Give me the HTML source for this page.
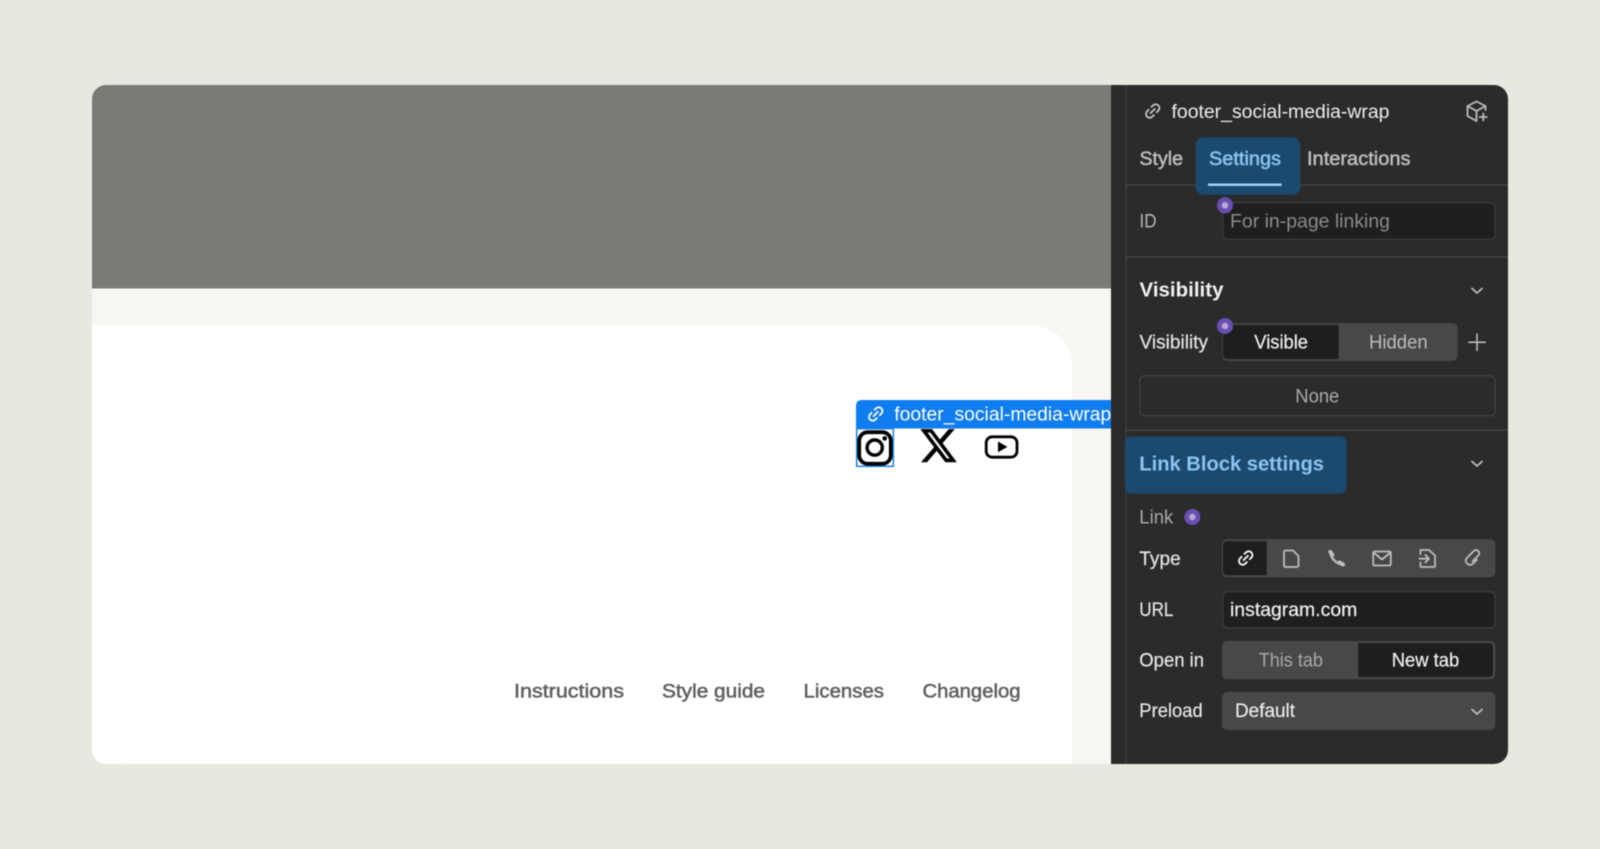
<!DOCTYPE html>
<html lang="en">
<head>
<meta charset="utf-8">
<title>Link Block settings</title>
<style>
html,body{margin:0;padding:0;background:#e8e8e1;width:1600px;height:849px;overflow:hidden}
svg{display:block;filter:blur(.5px)}
text{font-family:"Liberation Sans",sans-serif;font-size:19px}
.m{stroke-width:.5px}
.r{stroke-width:.2px}
.b{font-weight:bold;font-size:20px}
.ic{fill:none;stroke:#bdbdbd;stroke-width:1.8;stroke-linecap:round;stroke-linejoin:round}
</style>
</head>
<body>
<svg width="1600" height="849" viewBox="0 0 1600 849" xmlns="http://www.w3.org/2000/svg">
<defs>
<clipPath id="card"><rect x="92" y="85" width="1416" height="679" rx="14"/></clipPath>
<clipPath id="lbl"><rect x="856" y="400" width="255" height="29"/></clipPath>
<path id="lnk" d="M6.2 9.8l3.6-3.6M7 4.6l1.3-1.3a3.1 3.1 0 0 1 4.4 4.4L11.4 9M9 11.4l-1.3 1.3a3.1 3.1 0 0 1-4.4-4.4L4.6 7" fill="none" stroke-width="1.5" stroke-linecap="round"/>
</defs>
<rect width="1600" height="849" fill="#e8e8e1"/>
<g clip-path="url(#card)">
  <!-- canvas -->
  <rect x="92" y="85" width="1020" height="203.5" fill="#7b7a77"/>
  <rect x="92" y="288.5" width="1020" height="476" fill="#f7f6f2"/>
  <rect x="92" y="288.5" width="1020" height="1.5" fill="#fbfaf7"/>
  <path d="M92 325.5H1032a40 40 0 0 1 40 40V764H92z" fill="#fff"/>
  <rect x="124" y="345" width="1" height="419" fill="#fcfcfb"/>

  <!-- footer links -->
  <g fill="#5f5f5f" stroke="#5f5f5f">
    <text x="514" y="697.5" textLength="110" lengthAdjust="spacingAndGlyphs" class="m">Instructions</text>
    <text x="662" y="697.5" textLength="103" lengthAdjust="spacingAndGlyphs" class="m">Style guide</text>
    <text x="803.5" y="697.5" textLength="80.5" lengthAdjust="spacingAndGlyphs" class="m">Licenses</text>
    <text x="922.5" y="697.5" textLength="98" lengthAdjust="spacingAndGlyphs" class="m">Changelog</text>
  </g>

  <!-- selection label -->
  <path d="M856 428.5V405a5 5 0 0 1 5-5H1112V428.5z" fill="#0f7def"/>
  <g transform="translate(866.1 404.4) scale(1.2)" stroke="#fff"><use href="#lnk"/></g>
  <g clip-path="url(#lbl)"><text x="894.3" y="420.5" textLength="217" lengthAdjust="spacingAndGlyphs" fill="#fff">footer_social-media-wrap</text></g>

  <!-- instagram -->
  <rect x="856.7" y="428.7" width="36.6" height="37.6" fill="none" stroke="#1583ee" stroke-width="1.5"/>
  <rect x="859.2" y="432.2" width="31.6" height="31.6" rx="8.5" fill="none" stroke="#000" stroke-width="3.8"/>
  <circle cx="874.7" cy="447.6" r="7.6" fill="none" stroke="#000" stroke-width="3.4"/>
  <circle cx="884.7" cy="438.4" r="2.3" fill="#000"/>

  <!-- X -->
  <path transform="translate(918.6 425.5) scale(1.66 1.68)" d="M18.244 2.25h3.308l-7.227 8.26 8.502 11.24H16.17l-5.214-6.817L4.99 21.75H1.68l7.73-8.835L1.254 2.25H8.08l4.713 6.231zm-1.161 17.52h1.833L7.084 4.126H5.117z" fill="#000" stroke="#000" stroke-width=".25"/>

  <!-- youtube -->
  <rect x="986.2" y="436.8" width="30.8" height="20.4" rx="6" fill="none" stroke="#000" stroke-width="2.8"/>
  <path d="M998 441.5l9.5 5.4-9.5 5.4z" fill="#000"/>

  <!-- panel -->
  <rect x="1111" y="85" width="397" height="679" fill="#2b2b2b"/>
  <rect x="1125.5" y="85" width="1" height="679" fill="#444"/>
  <rect x="1126" y="184.5" width="382" height="1.2" fill="#484848"/>
  <rect x="1126" y="256.5" width="382" height="1.2" fill="#484848"/>
  <rect x="1126" y="429.5" width="382" height="1.2" fill="#484848"/>

  <!-- header -->
  <g transform="translate(1143.1 101.4) scale(1.2)" stroke="#c4c4c4"><use href="#lnk"/></g>
  <text x="1171.5" y="118" textLength="218" lengthAdjust="spacingAndGlyphs" fill="#ececec">footer_social-media-wrap</text>
  <path class="ic" d="M1476.5 121l-9-5v-10l9-4.5 9 4.5v4M1467.5 106l9 5 9-5M1476.5 111v10M1483.3 113.5v7M1479.7 117h7.2"/>

  <!-- tabs -->
  <rect x="1195.7" y="137.3" width="104.6" height="57.4" rx="8" fill="#1c4a6f"/>
  <text x="1139.5" y="165" textLength="43.5" lengthAdjust="spacingAndGlyphs" fill="#bdbdbd" stroke="#bdbdbd" class="m">Style</text>
  <text x="1209" y="165" textLength="72" lengthAdjust="spacingAndGlyphs" fill="#8cc4f2" stroke="#8cc4f2" class="m">Settings</text>
  <text x="1307" y="165" textLength="103.5" lengthAdjust="spacingAndGlyphs" fill="#bdbdbd" stroke="#bdbdbd" class="m">Interactions</text>
  <rect x="1208" y="183.5" width="73.6" height="2.4" fill="#a8d5f9"/>

  <!-- ID -->
  <text x="1139.5" y="227.5" textLength="17" lengthAdjust="spacingAndGlyphs" fill="#b8b8b8">ID</text>
  <rect x="1222.8" y="202.8" width="272.4" height="36.4" rx="5" fill="#1f1f1f" stroke="#434343"/>
  <text x="1230" y="227.5" textLength="160" lengthAdjust="spacingAndGlyphs" fill="#8a8a8a">For in-page linking</text>

  <!-- Visibility -->
  <text x="1139.5" y="296.5" textLength="84" lengthAdjust="spacingAndGlyphs" class="b" fill="#f0f0f0">Visibility</text>
  <path d="M1472 288.5l5 4.5 5-4.5" class="ic"/>
  <text x="1139.5" y="348.5" textLength="68.5" lengthAdjust="spacingAndGlyphs" fill="#e6e6e6" stroke="#e6e6e6" class="r">Visibility</text>
  <rect x="1222.3" y="323.3" width="235.4" height="37.7" rx="5" fill="#484848"/>
  <path d="M1227 325h111.7v34H1227a4 4 0 0 1-4-4v-26a4 4 0 0 1 4-4z" fill="#1e1e1e"/>
  <text x="1254.3" y="348.5" textLength="53.7" lengthAdjust="spacingAndGlyphs" fill="#f2f2f2" stroke="#f2f2f2" class="r">Visible</text>
  <text x="1369" y="348.5" textLength="58.7" lengthAdjust="spacingAndGlyphs" fill="#bcbcbc">Hidden</text>
  <path d="M1477 333.5v17.5M1468.3 342.3h17.4" fill="none" stroke="#c4c4c4" stroke-width="1.5"/>
  <rect x="1139.8" y="375.8" width="355.4" height="40" rx="5" fill="none" stroke="#4a4a4a"/>
  <text x="1295.3" y="402.5" textLength="44" lengthAdjust="spacingAndGlyphs" fill="#ababab">None</text>

  <!-- Link block -->
  <rect x="1125" y="436.5" width="221.7" height="57.3" rx="7" fill="#1c4a6f"/>
  <text x="1139.3" y="470.5" textLength="184.7" lengthAdjust="spacingAndGlyphs" class="b" fill="#8cc4f2">Link Block settings</text>
  <path d="M1472 461.5l5 4.5 5-4.5" class="ic"/>
  <text x="1139.3" y="523.5" textLength="34" lengthAdjust="spacingAndGlyphs" fill="#a9a9a9">Link</text>

  <!-- Type -->
  <text x="1139.3" y="565" textLength="41.4" lengthAdjust="spacingAndGlyphs" fill="#e6e6e6" stroke="#e6e6e6" class="r">Type</text>
  <rect x="1222" y="539.3" width="273.3" height="38" rx="5" fill="#484848"/>
  <path d="M1227 541.3h39.7v34H1227a4 4 0 0 1-4-4v-26a4 4 0 0 1 4-4z" fill="#1e1e1e"/>
  <g transform="translate(1236.1 548.4) scale(1.2)" stroke="#fff"><use href="#lnk"/></g>
  <path class="ic" d="M1285.5 550.5h7.5l5.5 5.5v9.5a1.5 1.5 0 0 1-1.5 1.5h-11.5a1.5 1.5 0 0 1-1.5-1.5v-13.5a1.5 1.5 0 0 1 1.5-1.5z"/>
  <path d="M1330.5 552.5C1331 558 1335.5 563 1341.5 564.5" fill="none" stroke="#bdbdbd" stroke-width="2.4" stroke-linecap="round"/>
  <path d="M1330.3 551.8l2 3M1339.5 562.5l3.5 2" fill="none" stroke="#bdbdbd" stroke-width="4" stroke-linecap="round"/>
  <rect x="1373.2" y="551.5" width="17.6" height="14" rx="1.2" class="ic"/>
  <path class="ic" d="M1373.5 552.5l8.5 7 8.5-7"/>
  <path class="ic" d="M1420.5 554v-4h8.5l6 5.5v10.5a1 1 0 0 1-1 1h-12.5a1 1 0 0 1-1-1v-3.5M1419.5 558.7h9.5M1425.3 555l3.7 3.7-3.7 3.7"/>
  <path class="ic" transform="translate(1473.2 557.5) rotate(45)" d="M4.2-1V4.5a4.2 4.2 0 0 1-8.4 0V-5a3.2 3.2 0 0 1 6.4 0V3"/>

  <!-- URL -->
  <text x="1139.3" y="616" textLength="34" lengthAdjust="spacingAndGlyphs" fill="#e6e6e6" stroke="#e6e6e6" class="r">URL</text>
  <rect x="1222.8" y="591.8" width="272.4" height="36" rx="5" fill="#1f1f1f" stroke="#434343"/>
  <text x="1230" y="616" textLength="127.3" lengthAdjust="spacingAndGlyphs" fill="#f2f2f2" stroke="#f2f2f2" class="r">instagram.com</text>

  <!-- Open in -->
  <text x="1139.3" y="666.5" textLength="64.7" lengthAdjust="spacingAndGlyphs" fill="#e6e6e6" stroke="#e6e6e6" class="r">Open in</text>
  <rect x="1222" y="641" width="273.3" height="38.3" rx="5" fill="#484848"/>
  <path d="M1358.3 643H1489a4 4 0 0 1 4 4v26a4 4 0 0 1-4 4h-130.7z" fill="#1e1e1e"/>
  <text x="1258.7" y="666.5" textLength="64.3" lengthAdjust="spacingAndGlyphs" fill="#a9a9a9">This tab</text>
  <text x="1391.7" y="666.5" textLength="67.6" lengthAdjust="spacingAndGlyphs" fill="#f2f2f2" stroke="#f2f2f2" class="r">New tab</text>

  <!-- Preload -->
  <text x="1139.3" y="717" textLength="63.4" lengthAdjust="spacingAndGlyphs" fill="#e6e6e6" stroke="#e6e6e6" class="r">Preload</text>
  <rect x="1222" y="692" width="273.3" height="38" rx="5" fill="#484848"/>
  <text x="1235" y="717" textLength="60" lengthAdjust="spacingAndGlyphs" fill="#ececec" stroke="#ececec" class="r">Default</text>
  <path d="M1472 709.5l5 4.5 5-4.5" class="ic"/>

  <!-- purple dots -->
  <g>
    <circle cx="1225" cy="205.3" r="8" fill="#6a4fb3"/><circle cx="1225" cy="205.3" r="3.2" fill="#b9a9d2"/>
    <circle cx="1225" cy="326" r="8" fill="#6a4fb3"/><circle cx="1225" cy="326" r="3.2" fill="#b9a9d2"/>
    <circle cx="1192.3" cy="517" r="8" fill="#6a4fb3"/><circle cx="1192.3" cy="517" r="3.2" fill="#b9a9d2"/>
  </g>
</g>
</svg>
</body>
</html>
